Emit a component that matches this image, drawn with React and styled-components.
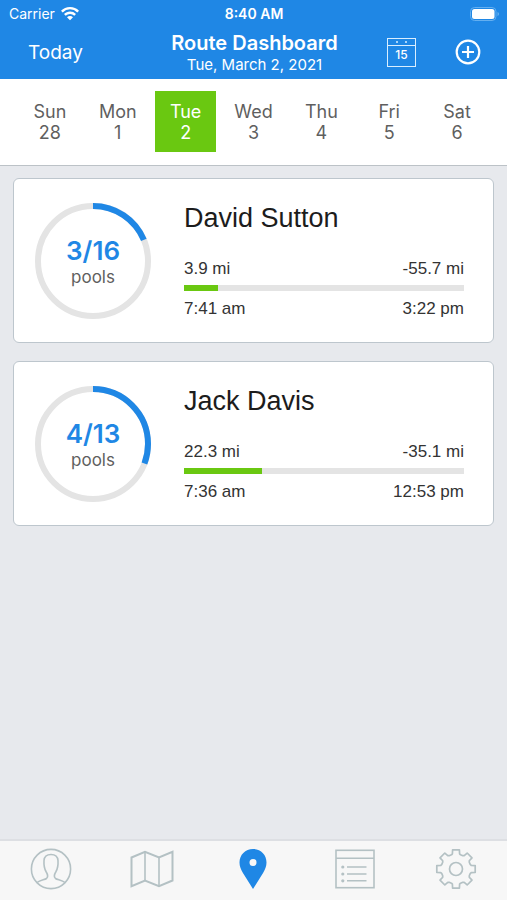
import React, { useState } from "react";
import styled, { createGlobalStyle } from "styled-components";

const GlobalStyle = createGlobalStyle`
  * {
    box-sizing: border-box;
  }

  body {
    margin: 0;
    background-color: #e7e9ed;
    font-family: Inter, "Liberation Sans", sans-serif;
  }

  button {
    padding: 0;
    border: none;
    background: none;
    font-family: inherit;
    color: inherit;
    cursor: pointer;
  }
`;

const Page = styled.div`
  display: flex;
  flex-direction: column;
  min-height: 100vh;
`;

const Header = styled.header`
  background-color: #1f87e5;
  color: white;
`;

const StatusBar = styled.div`
  display: grid;
  grid-template-columns: 1fr auto 1fr;
  align-items: center;
  height: 27px;
  padding: 0 8px 0 9px;
  font-size: 14px;
`;

const Carrier = styled.div`
  display: flex;
  align-items: center;
  gap: 6px;
`;

const Clock = styled.div`
  font-weight: 600;
`;

const BatteryIcon = styled.svg`
  justify-self: end;
`;

const NavBar = styled.div`
  display: grid;
  grid-template-columns: 1fr auto 1fr;
  align-items: center;
  height: 52px;
  padding: 0 26px 0 28px;
`;

const TodayButton = styled.button`
  justify-self: start;
  font-size: 19px;
  line-height: 24px;
`;

const TitleBox = styled.div`
  text-align: center;
`;

const Title = styled.h1`
  margin: 0;
  font-size: 20px;
  font-weight: 600;
  line-height: 24px;
`;

const SubTitle = styled.div`
  font-size: 15px;
  line-height: 20px;
`;

const NavActions = styled.div`
  display: flex;
  align-items: center;
  justify-content: flex-end;
  gap: 39px;
  padding-bottom: 2px;
`;

const IconButton = styled.button`
  display: flex;
`;

const Week = styled.div`
  display: grid;
  grid-template-columns: repeat(7, 1fr);
  justify-items: center;
  padding: 12px 16px 13px;
  background-color: white;
  border-bottom: 1px solid #bcc2c7;
`;

const Day = styled.button`
  width: 61px;
  height: 61px;
  font-size: 18px;
  line-height: 21px;
  color: ${(props) => (props.$active ? "white" : "#5f5f5f")};
  background-color: ${(props) => (props.$active ? "#6ac811" : "transparent")};
`;

const DayText = styled.span`
  display: block;
`;

const RouteList = styled.main`
  display: flex;
  flex-direction: column;
  flex: 1;
  gap: 18px;
  padding: 12px 13px;
`;

const Card = styled.article`
  display: flex;
  align-items: center;
  gap: 33px;
  height: 165px;
  padding: 0 29px 0 21px;
  background-color: white;
  border: 1px solid #bdc6cd;
  border-radius: 6px;
`;

const RingBox = styled.div`
  display: grid;
  flex-shrink: 0;
  width: 116px;
  height: 116px;

  > * {
    grid-area: 1 / 1;
  }
`;

const RingLabel = styled.div`
  align-self: center;
  padding-top: 4px;
  text-align: center;
`;

const RingCount = styled.div`
  font-size: 26px;
  font-weight: 600;
  line-height: 28px;
  color: #1f87e5;
`;

const RingUnit = styled.div`
  font-size: 17px;
  line-height: 24px;
  color: #5f5f5f;
`;

const Details = styled.div`
  flex: 1;
  padding-top: 2px;
  font-family: "Liberation Sans", Arial, sans-serif;
`;

const Name = styled.h2`
  margin: 0 0 23px;
  font-size: 27px;
  font-weight: 400;
  line-height: 32px;
  color: #1c1c1c;
`;

const DetailRow = styled.div`
  display: flex;
  justify-content: space-between;
  font-size: 17px;
  line-height: 24px;
  color: #333;
`;

const Track = styled.div`
  height: 6px;
  margin: 4px 0 6px;
  background-color: #e4e4e4;
`;

const TrackFill = styled.div`
  height: 100%;
  background-color: #6ac811;
`;

const TabBar = styled.nav`
  display: grid;
  grid-template-columns: repeat(5, 1fr);
  height: 61px;
  padding-bottom: 3px;
  background-color: #f7f7f7;
  border-top: 2px solid #dddfe3;
`;

const Tab = styled.button`
  display: flex;
  align-items: center;
  justify-content: center;
  color: ${(props) => (props.$active ? "#1f87e5" : "#b4c1c4")};
`;

const WifiIcon = () => (
  <svg width="18" height="14" viewBox="0 0 18 14" fill="white" aria-hidden="true">
    <path d="M9 0C5.500 0 2.300 1.400 0 3.700L1.700 5.400A10.300 10.300 0 0 1 16.300 5.400L18 3.700A12.700 12.700 0 0 0 9 0Z" />
    <path d="M9 4.600C6.700 4.600 4.600 5.500 3 7L4.700 8.700A6.200 6.200 0 0 1 13.300 8.700L15 7A8.600 8.600 0 0 0 9 4.600Z" />
    <path d="M9 9C7.800 9 6.800 9.500 6 10.200L9 13.300L12 10.200A4.300 4.300 0 0 0 9 9Z" />
  </svg>
);

const CalendarIcon = () => (
  <svg width="29" height="29" viewBox="0 0 29 29" fill="none" stroke="#d9eeff" aria-hidden="true">
    <rect x="0.500" y="0.500" width="28" height="28" />
    <path d="M0.500 7.500H28.500" />
    <circle cx="10" cy="4" r="1" fill="#d9eeff" stroke="none" />
    <circle cx="19" cy="4" r="1" fill="#d9eeff" stroke="none" />
    <text
      x="14.500"
      y="21"
      fontSize="12"
      fontWeight="500"
      textAnchor="middle"
      fill="white"
      stroke="none"
    >
      15
    </text>
  </svg>
);

const PlusIcon = () => (
  <svg width="26" height="26" viewBox="0 0 26 26" fill="none" stroke="white" strokeWidth="2.200" aria-hidden="true">
    <circle cx="13" cy="13" r="11.300" />
    <path d="M13 7V19M7 13H19" />
  </svg>
);

const PersonIcon = () => (
  <svg width="42" height="42" viewBox="0 0 42 42" fill="none" stroke="currentColor" strokeWidth="1.600" aria-hidden="true">
    <circle cx="21" cy="21" r="19.600" />
    <path d="M7 34.500C10 32 14.500 31.800 16.500 30.500C18.300 29 17.500 26 16 23.500C14.300 20.500 13.800 16 14 12.500C14.300 8.500 17 6.500 21 6.500C25 6.500 27.700 8.500 28 12.500C28.200 16 27.700 20.500 26 23.500C24.500 26 23.700 29 25.500 30.500C27.500 31.800 32 32 35 34.500" />
  </svg>
);

const MapIcon = () => (
  <svg width="44" height="38" viewBox="0 0 44 38" fill="none" stroke="currentColor" strokeWidth="2" aria-hidden="true">
    <path d="M1.500 7.500L15 1.800L29 7.500L42.500 1.800V30.500L29 36.200L15 30.500L1.500 36.200Z" />
    <path d="M15 1.800V30.500M29 7.500V36.200" strokeWidth="1.600" />
  </svg>
);

const PinIcon = () => (
  <svg width="28" height="40" viewBox="0 0 28 40" fill="currentColor" aria-hidden="true">
    <path
      fillRule="evenodd"
      d="M14 0C6.300 0 0.500 5.900 0.500 13.400C0.500 17 1.900 20.400 3.800 23.700L14 40L24.200 23.700C26.100 20.400 27.500 17 27.500 13.400C27.500 5.900 21.700 0 14 0ZM14 10A3.500 3.500 0 1 1 14 17A3.500 3.500 0 1 1 14 10Z"
    />
  </svg>
);

const ListIcon = () => (
  <svg width="40" height="40" viewBox="0 0 40 40" fill="none" stroke="currentColor" strokeWidth="1.600" aria-hidden="true">
    <rect x="1" y="1.300" width="38" height="37.400" />
    <path d="M1 9.300H39" />
    <path d="M12 18H31.500M12 25H31.500M12 31.800H31.500" />
    <g fill="currentColor" stroke="none">
      <circle cx="7.800" cy="18" r="1.600" />
      <circle cx="7.800" cy="25" r="1.600" />
      <circle cx="7.800" cy="31.800" r="1.600" />
    </g>
  </svg>
);

// one tooth, repeated every 45 degrees
const tooth = [
  [-4.6, -14.2],
  [-3.6, -15.2],
  [-3.4, -19.2],
  [3.4, -19.2],
  [3.6, -15.2],
  [4.6, -14.2],
];

const gearPoints = Array.from({ length: 8 }, (_, i) => {
  const a = (i * Math.PI) / 4;
  return tooth.map(
    ([x, y]) =>
      `${(x * Math.cos(a) - y * Math.sin(a)).toFixed(2)},${(
        x * Math.sin(a) +
        y * Math.cos(a)
      ).toFixed(2)}`
  );
})
  .flat()
  .join(" ");

const GearIcon = () => (
  <svg width="42" height="42" viewBox="-21 -21 42 42" fill="none" stroke="currentColor" strokeWidth="1.700" strokeLinejoin="round" aria-hidden="true">
    <polygon points={gearPoints} />
    <circle r="6.500" />
  </svg>
);

const days = [
  { name: "Sun", date: 28 },
  { name: "Mon", date: 1 },
  { name: "Tue", date: 2 },
  { name: "Wed", date: 3 },
  { name: "Thu", date: 4 },
  { name: "Fri", date: 5 },
  { name: "Sat", date: 6 },
];

const routes = [
  {
    name: "David Sutton",
    done: 3,
    total: 16,
    driven: "3.9 mi",
    left: "-55.7 mi",
    start: "7:41 am",
    end: "3:22 pm",
    progress: 12,
  },
  {
    name: "Jack Davis",
    done: 4,
    total: 13,
    driven: "22.3 mi",
    left: "-35.1 mi",
    start: "7:36 am",
    end: "12:53 pm",
    progress: 28,
  },
];

const tabs = [
  { label: "Customers", Icon: PersonIcon },
  { label: "Map", Icon: MapIcon },
  { label: "Routes", Icon: PinIcon },
  { label: "List", Icon: ListIcon },
  { label: "Settings", Icon: GearIcon },
];

const Ring = ({ done, total }) => (
  <RingBox>
    <svg width="116" height="116" viewBox="0 0 116 116" fill="none" strokeWidth="6" aria-hidden="true">
      <circle cx="58" cy="58" r="55" stroke="#e4e4e4" />
      <circle
        cx="58"
        cy="58"
        r="55"
        stroke="#1f87e5"
        pathLength={total}
        strokeDasharray={`${done} ${total - done}`}
        transform="rotate(-90 58 58)"
      />
    </svg>
    <RingLabel>
      <RingCount>
        {done}/{total}
      </RingCount>
      <RingUnit>pools</RingUnit>
    </RingLabel>
  </RingBox>
);

const RouteCard = ({ route }) => (
  <Card>
    <Ring done={route.done} total={route.total} />
    <Details>
      <Name>{route.name}</Name>
      <DetailRow>
        <span>{route.driven}</span>
        <span>{route.left}</span>
      </DetailRow>
      <Track>
        <TrackFill style={{ width: `${route.progress}%` }} />
      </Track>
      <DetailRow>
        <span>{route.start}</span>
        <span>{route.end}</span>
      </DetailRow>
    </Details>
  </Card>
);

export default function App() {
  const [activeDay, setActiveDay] = useState("Tue");
  const [activeTab, setActiveTab] = useState("Routes");

  return (
    <Page>
      <GlobalStyle />
      <Header>
        <StatusBar>
          <Carrier>
            Carrier
            <WifiIcon />
          </Carrier>
          <Clock>8:40 AM</Clock>
          <BatteryIcon width="29" height="14" viewBox="0 0 29 14" fill="none" aria-hidden="true">
            <rect x="0.500" y="0.500" width="25.500" height="13" rx="4" stroke="#64aff0" />
            <rect x="2" y="2" width="22.500" height="10" rx="2.500" fill="white" />
            <path d="M27.500 5V9C28.300 8.700 29 8 29 7C29 6 28.300 5.300 27.500 5Z" fill="#64aff0" />
          </BatteryIcon>
        </StatusBar>
        <NavBar>
          <TodayButton onClick={() => setActiveDay("Tue")}>Today</TodayButton>
          <TitleBox>
            <Title>Route Dashboard</Title>
            <SubTitle>Tue, March 2, 2021</SubTitle>
          </TitleBox>
          <NavActions>
            <IconButton aria-label="Calendar">
              <CalendarIcon />
            </IconButton>
            <IconButton aria-label="Add route">
              <PlusIcon />
            </IconButton>
          </NavActions>
        </NavBar>
      </Header>
      <Week>
        {days.map(({ name, date }) => (
          <Day
            key={name}
            $active={name === activeDay}
            onClick={() => setActiveDay(name)}
          >
            <DayText>{name}</DayText>
            <DayText>{date}</DayText>
          </Day>
        ))}
      </Week>
      <RouteList>
        {routes.map((route) => (
          <RouteCard key={route.name} route={route} />
        ))}
      </RouteList>
      <TabBar>
        {tabs.map(({ label, Icon }) => (
          <Tab
            key={label}
            aria-label={label}
            $active={label === activeTab}
            onClick={() => setActiveTab(label)}
          >
            <Icon />
          </Tab>
        ))}
      </TabBar>
    </Page>
  );
}
